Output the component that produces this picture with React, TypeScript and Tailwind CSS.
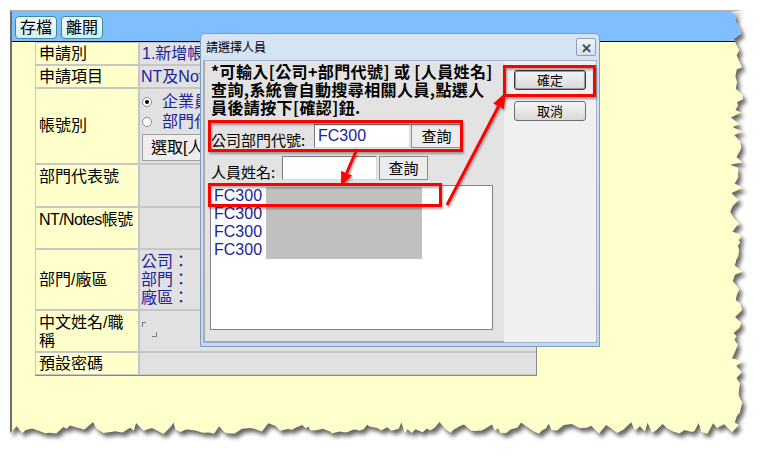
import React from 'react';

// seeded jitter for the torn paper edge
const rand = (() => {
  let s = 91357;
  return () => {
    s = (s * 1103515245 + 12345) % 2147483648;
    return s / 2147483648;
  };
})();

const edge: [number, number][] = (() => {
  const pts: [number, number][] = [[0, 0], [732, 0]];
  let y = 2;
  while (y < 416) {
    const x = 729 + (rand() - 0.5) * 8 - (rand() > 0.75 ? 5 : 0);
    pts.push([x, y]);
    y += 2 + rand() * 5;
  }
  let x = 728;
  while (x > 2) {
    const yy = 421 + (rand() - 0.5) * 6 - (rand() > 0.75 ? 6 : 0);
    pts.push([x, yy]);
    x -= 2 + rand() * 6;
  }
  pts.push([0, 423]);
  return pts;
})();

const clipPath = `polygon(${edge.map(([x, y]) => `${x}px ${y}px`).join(',')})`;
const shadowPts = edge.map(([x, y]) => `${x + 13},${y + 14}`).join(' ');

const Radio = ({ checked }: { checked?: boolean }) => (
  <span className="w-[10px] h-[10px] rounded-full border border-[#8a8a8a] bg-white flex items-center justify-center shrink-0">
    {checked && <span className="w-[4px] h-[4px] rounded-full bg-black" />}
  </span>
);

const Label = ({ children, top, className = '' }: { children: React.ReactNode; top?: boolean; className?: string }) => (
  <div className={`bg-[#ffffcc] pl-[3px] text-[16px] leading-[18px] text-black whitespace-nowrap flex ${top ? 'items-start pt-[3px]' : 'items-center'} ${className}`}>
    {children}
  </div>
);

const Val = ({ children, className = '' }: { children?: React.ReactNode; className?: string }) => (
  <div className={`bg-[#e1e1e1] text-[#1a2399] text-[16px] leading-[18px] whitespace-nowrap overflow-hidden ${className}`}>{children}</div>
);

const TopBtn = ({ children }: { children: React.ReactNode }) => (
  <button className="w-[42px] h-[23px] rounded-[4px] border border-[#3f8c97] bg-gradient-to-b from-[#f2fbff] to-[#d3eef7] text-[16px] leading-[20px] text-black">
    {children}
  </button>
);

const DlgBtn = ({ children, primary }: { children: React.ReactNode; primary?: boolean }) => (
  <button
    className={`w-[72px] h-[20px] rounded-[3px] bg-gradient-to-b from-[#f4f4f4] to-[#d9d9d9] text-[13px] leading-[18px] text-black ${
      primary ? 'border border-[#3c3c3c] shadow-[inset_0_0_0_1px_#9a9a9a]' : 'border border-[#707070]'
    }`}
  >
    {children}
  </button>
);

export default function App() {
  return (
    <div className="relative w-[762px] h-[456px] bg-white overflow-hidden pt-[10px] pl-[10px] font-['Liberation_Sans','Noto_Sans_CJK_TC',sans-serif]">
      <svg className="absolute inset-0" width="762" height="456">
        <defs>
          <filter id="blur" x="-5%" y="-5%" width="110%" height="110%">
            <feGaussianBlur stdDeviation="2" />
          </filter>
        </defs>
        <polygon points={shadowPts} fill="#000" opacity="0.6" filter="url(#blur)" />
      </svg>

      {/* paper */}
      <div className="relative w-[740px] h-[428px] bg-[#ffffcc] border-l-2 border-l-[#6e6e6e] border-t-2 border-t-[#b0b0b0]" style={{ clipPath }}>
        <div className="h-[30px] bg-[#80bfff] border-b border-black flex items-start gap-[4px] pl-[3px] pt-[4px]">
          <TopBtn>存檔</TopBtn>
          <TopBtn>離開</TopBtn>
        </div>

        <div className="ml-[23px] w-[502px] grid grid-cols-[102px_396px] grid-rows-[21px_21px_74px_41px_40px_59px_40px_21px] gap-[2px] p-[1px] bg-[#c6c6c6] border-b border-r border-[#8a8a8a]">
          <Label>申請別</Label>
          <Val className="pl-[2px] pt-[2px]">1.新增帳號</Val>

          <Label>申請項目</Label>
          <Val className="pl-[1px] pt-[2px]">NT及Notes帳號</Val>

          <Label>帳號別</Label>
          <Val className="pl-[2px] pt-[3px] flex flex-col">
            <div className="flex items-center gap-[10px] h-[20px]">
              <Radio checked />
              <span>企業員工帳號</span>
            </div>
            <div className="flex items-center gap-[10px] h-[20px]">
              <Radio />
              <span>部門代表號帳號</span>
            </div>
            <button className="mt-[2px] w-[90px] h-[27px] border border-[#a0a0a0] bg-[#eeeeee] text-black text-[16px] text-left pl-[8px]">選取[人員]</button>
          </Val>

          <Label top>部門代表號</Label>
          <Val />

          <Label top className="tracking-[-0.6px] pl-[2px]">NT/Notes帳號</Label>
          <Val />

          <Label>部門/廠區</Label>
          <Val className="pl-[1px] flex flex-col justify-center">
            <span>公司：</span>
            <span>部門：</span>
            <span>廠區：</span>
          </Val>

          <Label top>
            <span>
              中文姓名/職
              <br />稱
            </span>
          </Label>
          <Val className="pl-[2px] pt-[11px]">
            <div className="w-[4px] h-[5px] border-l border-t border-[#7a7a7a]" />
            <div className="ml-[10px] mt-[5px] w-[5px] h-[5px] border-r border-b border-[#7a7a7a]" />
          </Val>

          <Label>預設密碼</Label>
          <Val />
        </div>
      </div>

      {/* dialog */}
      <div className="absolute left-[200px] top-[33px] w-[400px] h-[314px] border border-[#7f9cbf] rounded-t-[5px] bg-gradient-to-b from-[#d6e4f4] to-[#c4d7ee] flex flex-col px-[2px] pb-[3px] font-['Noto_Sans_CJK_TC','Liberation_Sans',sans-serif]">
        <div className="h-[26px] flex items-center justify-between pl-[3px] pr-[1px]">
          <span className="text-[12px] text-black">請選擇人員</span>
          <span className="w-[20px] h-[18px] border border-[#8aa1bd] rounded-[2px] bg-gradient-to-b from-[#f3f6fa] to-[#d6e0ec] flex items-center justify-center text-[#3d4a5c] text-[13px] font-bold leading-none">✕</span>
        </div>
        <div className="flex flex-1 border border-[#9fb3cc]">
          <div className="w-[300px] bg-[#e3e3e3] border-l border-b border-[#a6a6a6] pl-[6px] pt-[1px] flex flex-col">
            <p className="text-[16px] leading-[18px] font-bold text-black whitespace-nowrap tracking-[0.4px]">
              *可輸入[公司+部門代號] 或 [人員姓名]
              <br />
              查詢,系統會自動搜尋相關人員,點選人
              <br />
              員後請按下[確認]鈕.
            </p>
            <div className="mt-[8px] flex items-end h-[24px]">
              <span className="w-[103px] text-[15px] leading-[17px] text-black whitespace-nowrap">公司部門代號:</span>
              <div className="w-[96px] h-[24px] bg-white border border-[#7a7a7a] border-r-[#d8d8d8] border-b-[#d8d8d8] pl-[3px] pt-[1px] text-[16px] leading-[20px] text-[#1a2399] font-['Liberation_Sans',sans-serif]">FC300</div>
              <button className="ml-[1px] w-[51px] h-[24px] border border-[#8c8c8c] bg-[#ececec] text-[15px] leading-[20px] text-black">查詢</button>
            </div>
            <div className="mt-[8px] flex items-end h-[24px]">
              <span className="w-[71px] text-[15px] leading-[17px] text-black whitespace-nowrap">人員姓名:</span>
              <div className="w-[95px] h-[24px] bg-white border border-[#7a7a7a] border-r-[#d8d8d8] border-b-[#d8d8d8]" />
              <button className="ml-[2px] w-[49px] h-[24px] border border-[#8c8c8c] bg-[#ececec] text-[15px] leading-[20px] text-black">查詢</button>
            </div>
            <div className="mt-[5px] -ml-[1px] w-[283px] h-[145px] bg-white border border-[#828282] pl-[3px] pt-[1px] font-['Liberation_Sans',sans-serif]">
              {[0, 1, 2, 3].map((i) => (
                <div key={i} className="flex h-[18px]">
                  <span className="w-[52px] text-[16px] leading-[18px] text-[#1a2399]">FC300</span>
                  <span className="w-[156px] bg-[#c0c0c0]" />
                </div>
              ))}
            </div>
          </div>
          <div className="flex-1 bg-[#f0f0f0] flex flex-col items-center pt-[9px] gap-[11px]">
            <DlgBtn primary>確定</DlgBtn>
            <DlgBtn>取消</DlgBtn>
          </div>
        </div>
      </div>

      {/* annotations */}
      <svg className="absolute inset-0 pointer-events-none drop-shadow-[1px_2px_1px_rgba(0,0,0,0.35)]" width="762" height="456">
        <g fill="none" stroke="#ff0000" strokeWidth="3">
          <rect x="209.5" y="121.5" width="252" height="29" />
          <rect x="209.5" y="184.5" width="231" height="21" />
          <rect x="504.5" y="66.5" width="90" height="29" />
          <line x1="357" y1="149" x2="346.6" y2="173.2" />
          <line x1="447" y1="205" x2="498.6" y2="106.2" />
        </g>
        <polygon points="341,186 352.1,175.6 341.1,170.8" fill="#ff0000" />
        <polygon points="506,92 503.9,109 493.3,103.4" fill="#ff0000" />
      </svg>
    </div>
  );
}
